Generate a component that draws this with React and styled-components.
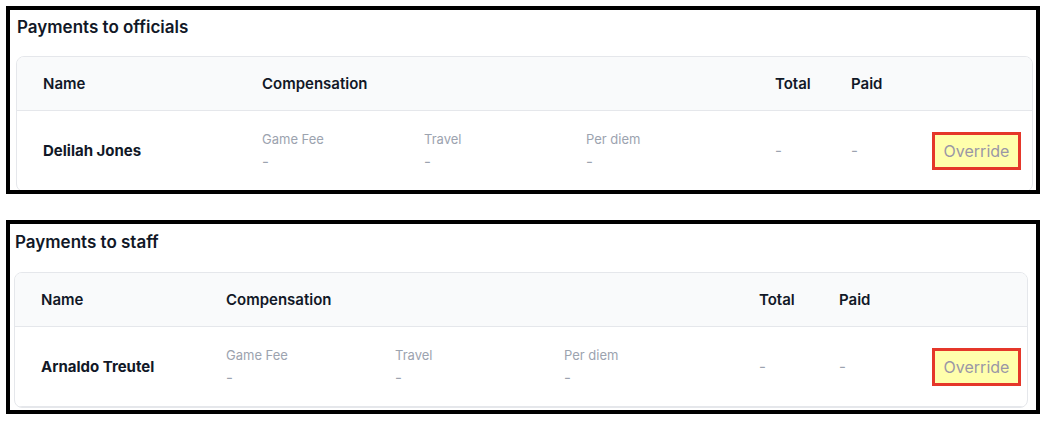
import styled, { createGlobalStyle } from "styled-components";

const GlobalStyle = createGlobalStyle`
  body {
    margin: 0;
    background: #ffffff;
    font-family: Inter, "Noto Sans", sans-serif;
    color: #111827;
  }
`;

const officials = {
  title: "Payments to officials",
  name: "Delilah Jones",
  cols: "219px 513px 76px 81px 89px",
  sub: "162px 162px 1fr",
  pad: "0 3px 0 6px",
  titleTop: "7px",
  titleHeight: "46px",
  cardRight: "12px",
  height: "188px",
};

const staff = {
  title: "Payments to staff",
  name: "Arnaldo Treutel",
  cols: "185px 533px 80px 93px 89px",
  sub: "169px 169px 1fr",
  pad: "0 8px 0 4px",
  titleTop: "8px",
  titleHeight: "48px",
  cardRight: "7px",
  height: "194px",
};

export default function App() {
  return (
    <>
      <GlobalStyle />
      <Page>
        {[officials, staff].map((t) => (
          <Panel key={t.title} $pad={t.pad} $height={t.height}>
            <Title $top={t.titleTop} $height={t.titleHeight}>
              {t.title}
            </Title>
            <Card>
              <HeaderRow $cols={t.cols} $right={t.cardRight}>
                <HeadCell>Name</HeadCell>
                <HeadCell>Compensation</HeadCell>
                <HeadCell>Total</HeadCell>
                <HeadCell>Paid</HeadCell>
                <HeadCell />
              </HeaderRow>
              <BodyRow $cols={t.cols} $right={t.cardRight}>
                <NameCell>{t.name}</NameCell>
                <SubGrid $cols={t.sub}>
                  {["Game Fee", "Travel", "Per diem"].map((l) => (
                    <Stat key={l}>
                      <StatLabel>{l}</StatLabel>
                      <Dash>-</Dash>
                    </Stat>
                  ))}
                </SubGrid>
                <Dash>-</Dash>
                <Dash>-</Dash>
                <OverrideButton>Override</OverrideButton>
              </BodyRow>
            </Card>
          </Panel>
        ))}
      </Page>
    </>
  );
}

const Page = styled.div`
  display: flex;
  flex-direction: column;
  gap: 26px;
  padding: 6px 0 0 6px;
`;

const Panel = styled.section`
  box-sizing: border-box;
  width: 1034px;
  height: ${(p) => p.$height};
  border: 4px solid #000;
  padding: ${(p) => p.$pad};
  overflow: hidden;
`;

const Title = styled.h2`
  margin: 0;
  padding: ${(p) => p.$top} 0 0 1px;
  height: ${(p) => p.$height};
  box-sizing: border-box;
  font-size: 17px;
  font-weight: 600;
  line-height: 20px;
  color: #111827;
`;

const Card = styled.div`
  border: 1px solid #e5e7eb;
  border-radius: 8px;
  overflow: hidden;
`;

const Row = styled.div`
  display: grid;
  grid-template-columns: ${(p) => p.$cols};
  align-items: center;
  padding: 0 ${(p) => p.$right} 0 26px;
`;

const HeaderRow = styled(Row)`
  height: 53px;
  background: #f9fafb;
  border-bottom: 1px solid #e5e7eb;
`;

const BodyRow = styled(Row)`
  height: 79px;
  border-bottom: 1px solid #e5e7eb;
`;

const HeadCell = styled.div`
  font-size: 15px;
  font-weight: 600;
  color: #111827;
`;

const NameCell = styled.div`
  font-size: 15px;
  font-weight: 700;
  color: #111827;
`;

const SubGrid = styled.div`
  display: grid;
  grid-template-columns: ${(p) => p.$cols};
`;

const Stat = styled.div`
  display: flex;
  flex-direction: column;
  gap: 6px;
`;

const StatLabel = styled.span`
  font-size: 13px;
  color: #9ca3af;
  line-height: 16px;
`;

const Dash = styled.span`
  font-size: 15px;
  color: #9ca3af;
  line-height: 18px;
`;

const OverrideButton = styled.button`
  box-sizing: border-box;
  width: 89px;
  height: 38px;
  border: 3px solid #e5372a;
  background: #ffffac;
  color: #9a97a6;
  font-family: Inter, "Noto Sans", sans-serif;
  font-size: 16px;
  padding: 0;
`;
